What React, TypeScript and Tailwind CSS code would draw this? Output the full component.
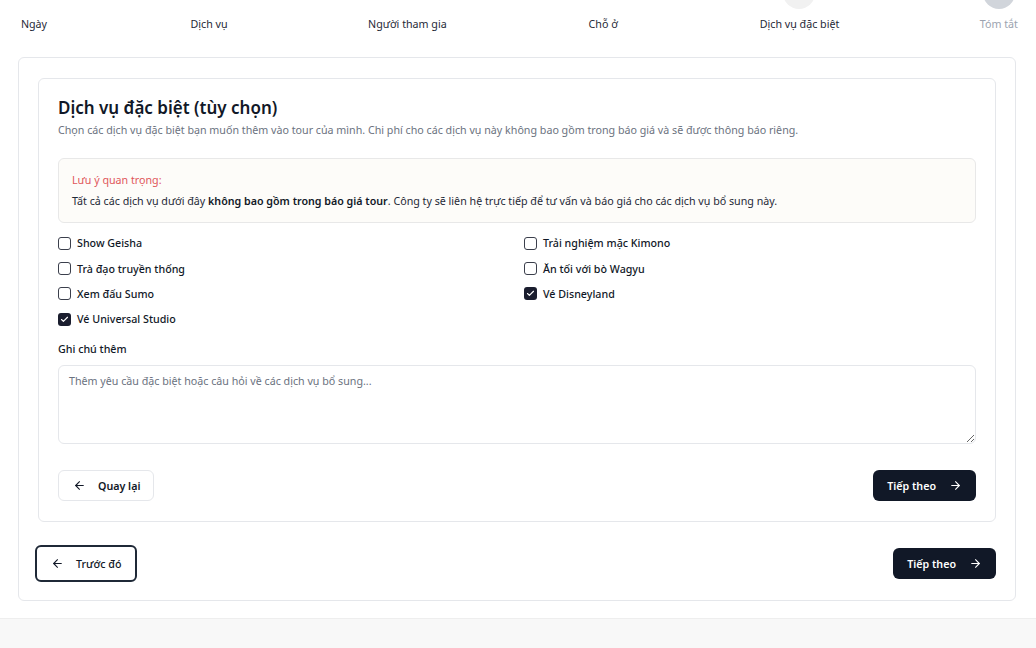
import { ArrowLeft, ArrowRight, Check } from "lucide-react";

const steps = [
  { label: "Ngày", circle: "bg-white" },
  { label: "Dịch vụ", circle: "bg-white" },
  { label: "Người tham gia", circle: "bg-white" },
  { label: "Chỗ ở", circle: "bg-white" },
  { label: "Dịch vụ đặc biệt", circle: "bg-[#f1f1f1]" },
  { label: "Tóm tắt", circle: "bg-[#d1d5db]", muted: true },
];

const services = [
  { label: "Show Geisha", checked: false },
  { label: "Trải nghiệm mặc Kimono", checked: false },
  { label: "Trà đạo truyền thống", checked: false },
  { label: "Ăn tối với bò Wagyu", checked: false },
  { label: "Xem đấu Sumo", checked: false },
  { label: "Vé Disneyland", checked: true },
  { label: "Vé Universal Studio", checked: true },
];

function Box({ checked }: { checked: boolean }) {
  return checked ? (
    <span className="flex h-[13px] w-[13px] items-center justify-center rounded-[3px] bg-[#1a1d2e]">
      <Check className="h-[9px] w-[9px] text-white" strokeWidth={3} />
    </span>
  ) : (
    <span className="h-[13px] w-[13px] rounded-[3px] border border-[#3b3f4c] bg-white" />
  );
}

export default function App() {
  return (
    <div className="min-h-[648px] bg-white text-[10.7px] text-[#1f2937]" style={{ fontFamily: '"Noto Sans", sans-serif' }}>
      <nav className="-mt-[23px] flex items-start justify-between pl-[18px] pr-[18px]">
        {steps.map((s) => (
          <div key={s.label} className="flex flex-col items-center gap-[7px]">
            <span className={`h-8 w-8 rounded-full ${s.circle}`} />
            <span className={s.muted ? "text-[#9ca3af]" : "text-[#1f2937]"}>{s.label}</span>
          </div>
        ))}
      </nav>

      <div className="pl-[18px] pr-[20px] pt-[25px]">
        <section className="rounded-md border border-[#e5e7eb] px-[19px] pb-[18px] pt-[20px]">
          <div className="rounded-md border border-[#e5e7eb] px-[19px] pb-[20px] pt-[18px]">
            <h2 className="text-[17px] font-semibold leading-[22px] text-[#111827]">Dịch vụ đặc biệt (tùy chọn)</h2>
            <p className="mt-[3px] text-[#6b7280]">
              Chọn các dịch vụ đặc biệt bạn muốn thêm vào tour của mình. Chi phí cho các dịch vụ này không bao gồm trong báo giá và sẽ được thông báo riêng.
            </p>

            <div className="mt-[20px] rounded-md border border-[#e8e8e8] bg-[#fdfcf9] px-[13px] py-[13px]">
              <p className="text-[#e0575b]">Lưu ý quan trọng:</p>
              <p className="mt-[5px] text-[#1f2937]">
                Tất cả các dịch vụ dưới đây <span className="font-semibold text-[#111827]">không bao gồm trong báo giá tour</span>. Công ty sẽ liên hệ trực tiếp để tư vấn và báo giá cho các dịch vụ bổ sung này.
              </p>
            </div>

            <div className="mt-[12px] grid grid-cols-2 gap-x-[14px] gap-y-[9.4px]">
              {services.map((s) => (
                <label key={s.label} className="flex h-[16px] items-center gap-[6px] font-medium text-[#111827]">
                  <Box checked={s.checked} />
                  {s.label}
                </label>
              ))}
            </div>

            <p className="mt-[14px] font-medium text-[#111827]">Ghi chú thêm</p>
            <textarea
              className="mt-[8px] block h-[79px] w-full resize-y rounded-md border border-[#e5e7eb] px-[10px] py-[7px] text-[10.7px] placeholder:text-[#6b7280]"
              placeholder="Thêm yêu cầu đặc biệt hoặc câu hỏi về các dịch vụ bổ sung..."
            />

            <div className="mt-[26px] flex items-center justify-between">
              <button className="flex h-[31px] items-center gap-[12px] rounded-md border border-[#e5e7eb] bg-white pl-[14px] pr-[13px] font-semibold text-[#111827]">
                <ArrowLeft className="h-[13px] w-[13px]" strokeWidth={2} />
                Quay lại
              </button>
              <button className="flex h-[31px] items-center gap-[13px] rounded-md bg-[#111827] px-[14px] font-semibold text-white">
                Tiếp theo
                <ArrowRight className="h-[13px] w-[13px]" strokeWidth={2} />
              </button>
            </div>
          </div>

          <div className="mt-[23px] flex items-center justify-between">
            <button className="-ml-[3px] flex h-[37px] items-center gap-[12px] rounded-md border-2 border-[#1f2937] bg-white pl-[14px] pr-[14px] font-medium text-[#111827]">
              <ArrowLeft className="h-[13px] w-[13px]" strokeWidth={2} />
              Trước đó
            </button>
            <button className="flex h-[31px] items-center gap-[13px] rounded-md bg-[#111827] px-[14px] font-semibold text-white">
              Tiếp theo
              <ArrowRight className="h-[13px] w-[13px]" strokeWidth={2} />
            </button>
          </div>
        </section>
      </div>

      <div className="mt-[17px] h-[30px] border-t border-[#eeeeee] bg-[#f8f8f8]" />
    </div>
  );
}
